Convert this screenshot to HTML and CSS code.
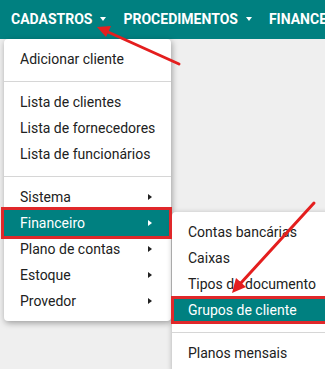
FILE: index.html
```html
<!DOCTYPE html>
<html>
<head>
<meta charset="utf-8">
<link rel="stylesheet" href="styles.css">
</head>
<body>
<nav class="navbar">
  <div class="nav-item">CADASTROS<span class="caret-down"></span></div>
  <div class="nav-item">PROCEDIMENTOS<span class="caret-down"></span></div>
  <div class="nav-item">FINANCEIRO<span class="caret-down"></span></div>
</nav>
<main class="content"></main>

<ul class="menu">
  <li class="item">Adicionar cliente</li>
  <li class="divider"></li>
  <li class="item">Lista de clientes</li>
  <li class="item">Lista de fornecedores</li>
  <li class="item">Lista de funcionários</li>
  <li class="divider"></li>
  <li class="item sub">Sistema<span class="caret-right"></span></li>
  <li class="item sub active">Financeiro<span class="caret-right"></span>
    <ul class="menu submenu">
      <li class="item">Contas bancárias</li>
      <li class="item">Caixas</li>
      <li class="item">Tipos de documento</li>
      <li class="item active mark-sub">Grupos de cliente</li>
      <li class="divider"></li>
      <li class="item">Planos mensais</li>
    </ul>
  </li>
  <li class="item sub">Plano de contas<span class="caret-right"></span></li>
  <li class="item sub">Estoque<span class="caret-right"></span></li>
  <li class="item sub">Provedor<span class="caret-right"></span></li>
</ul>

<svg class="arrows" width="325" height="369" viewBox="0 0 325 369">
  <g stroke="#e41e1e" stroke-width="3" fill="#e41e1e" stroke-linecap="round">
    <line x1="179" y1="64" x2="108" y2="32"/>
    <polygon points="97,27 111,26 106,37" stroke="none"/>
    <line x1="314" y1="203" x2="240" y2="284"/>
    <polygon points="232,293 236,278 246,287" stroke="none"/>
  </g>
</svg>
</body>
</html>
```
FILE: styles.css
```css
* { box-sizing: border-box; }
html, body { margin: 0; padding: 0; }
body {
  width: 325px;
  height: 369px;
  overflow: hidden;
  background: #efefef;
  font-family: Roboto, "Noto Sans", sans-serif;
  position: relative;
}
.navbar {
  height: 39px;
  background: #008080;
  display: flex;
  align-items: center;
  padding-left: 11px;
  gap: 17px;
  white-space: nowrap;
}
.nav-item {
  color: #fff;
  font-weight: 700;
  font-size: 14px;
  display: flex;
  align-items: center;
  padding-bottom: 1px;
}
.caret-down {
  display: inline-block;
  margin-left: 8px;
  width: 0;
  height: 0;
  border-left: 3.5px solid transparent;
  border-right: 3.5px solid transparent;
  border-top: 4px solid #fff;
}
.menu {
  list-style: none;
  margin: 0;
  padding: 7px 0;
  position: absolute;
  left: 4px;
  top: 39px;
  width: 167px;
  background: #fff;
  border-radius: 4px;
  box-shadow: 1px 2px 6px rgba(0,0,0,0.35);
  font-size: 14px;
  color: #212121;
}
.item {
  height: 26px;
  line-height: 26px;
  padding-left: 16px;
  position: relative;
  white-space: nowrap;
}
.divider {
  height: 1px;
  background: #d6d6d6;
  margin: 9px 0 7px;
}
.caret-right {
  position: absolute;
  left: 144px;
  top: 10px;
  width: 0;
  height: 0;
  border-top: 3.5px solid transparent;
  border-bottom: 3.5px solid transparent;
  border-left: 4px solid #212121;
}
.item.active {
  background: #008080;
  color: #fff;
}
.item.active > .caret-right { border-left-color: #fff; }
.item.active::after {
  content: "";
  position: absolute;
  left: -3px;
  right: -1px;
  top: -3px;
  bottom: -3px;
  border: 3px solid #e0282a;
  pointer-events: none;
}
.submenu {
  left: 168px;
  top: 2px;
  width: 175px;
  color: #212121;
  border-radius: 4px 0 0 4px;
}
.submenu .item.mark-sub::after {
  left: -1px;
  right: 2px;
  top: -1px;
  bottom: -1px;
}
.arrows {
  position: absolute;
  left: 0;
  top: 0;
  pointer-events: none;
}
```
